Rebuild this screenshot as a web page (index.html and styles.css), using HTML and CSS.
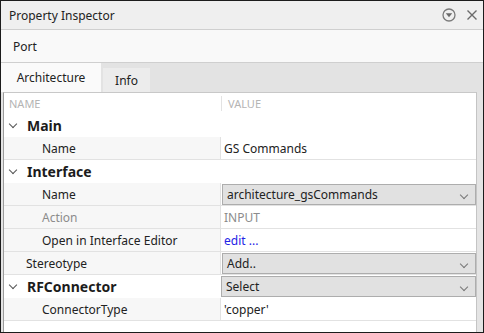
FILE: index.html
```html
<!DOCTYPE html>
<html lang="en">

<head>
    <meta charset="utf-8">
    <title>Property Inspector</title>
    <link rel="stylesheet" href="styles.css">
</head>

<body>
    <div class="panel">
        <header class="titlebar">
            <span class="title">Property Inspector</span>
            <span class="tools">
                <svg width="14" height="14" viewBox="0 0 14 14">
                    <circle cx="7" cy="7" r="6" fill="none" stroke="#7a7a7a" stroke-width="1.3" />
                    <polygon points="3.8,5.3 10.2,5.3 7,9.2" fill="#6a6a6a" />
                </svg>
                <svg width="12" height="12" viewBox="0 0 12 12">
                    <path d="M1.5 1.5 L10.5 10.5 M10.5 1.5 L1.5 10.5" stroke="#6a6a6a" stroke-width="1.4" />
                </svg>
            </span>
        </header>

        <div class="portbar">Port</div>

        <nav class="tabs">
            <div class="tab aktiv">Architecture</div>
            <div class="tab">Info</div>
        </nav>

        <section class="grid">
            <div class="row head">
                <div class="cell navn">NAME</div>
                <div class="cell vaerdi"><span class="skille"></span>VALUE</div>
            </div>

            <div class="row gruppe">
                <div class="cell navn"><span class="pil"></span>Main</div>
                <div class="cell vaerdi"></div>
            </div>
            <div class="row barn">
                <div class="cell navn">Name</div>
                <div class="cell vaerdi">GS Commands</div>
            </div>

            <div class="row gruppe">
                <div class="cell navn"><span class="pil"></span>Interface</div>
                <div class="cell vaerdi"></div>
            </div>
            <div class="row barn">
                <div class="cell navn">Name</div>
                <div class="cell vaerdi"><div class="dropdown">architecture_gsCommands</div></div>
            </div>
            <div class="row barn slukket">
                <div class="cell navn">Action</div>
                <div class="cell vaerdi">INPUT</div>
            </div>
            <div class="row barn">
                <div class="cell navn">Open in Interface Editor</div>
                <div class="cell vaerdi"><span class="link">edit ...</span></div>
            </div>
            <div class="row niveau">
                <div class="cell navn">Stereotype</div>
                <div class="cell vaerdi"><div class="dropdown">Add..</div></div>
            </div>

            <div class="row gruppe">
                <div class="cell navn"><span class="pil"></span>RFConnector</div>
                <div class="cell vaerdi"><div class="dropdown">Select</div></div>
            </div>
            <div class="row barn">
                <div class="cell navn">ConnectorType</div>
                <div class="cell vaerdi">'copper'</div>
            </div>
        </section>
    </div>
</body>

</html>
```

FILE: styles.css
```css
body {
    margin: 0;
    font-family: 'Noto Sans', 'Open Sans', sans-serif;
    font-size: 12px;
    color: #222;
}

.panel {
    width: 482px;
    height: 331px;
    border: 1px solid #1c1c1c;
    background-color: #e4e4e4;
    display: flex;
    flex-direction: column;
    overflow: hidden;
}

.titlebar {
    height: 28px;
    flex-shrink: 0;
    display: flex;
    align-items: center;
    justify-content: space-between;
    padding: 0 5px 0 8px;
    background-color: #efefef;
}

.title {
    font-size: 12px;
}

.tools {
    display: flex;
    align-items: center;
    gap: 10px;
}

.portbar {
    height: 32px;
    flex-shrink: 0;
    display: flex;
    align-items: center;
    padding-left: 12px;
    background-color: #f9f9f9;
    border-top: 1px solid #cfcfcf;
    border-bottom: 1px solid #cfcfcf;
}

/* faner */
.tabs {
    height: 29px;
    flex-shrink: 0;
    display: flex;
    align-items: flex-end;
    background-color: #e3e3e3;
}

.tab {
    height: 24px;
    width: 47px;
    margin-left: 2px;
    display: flex;
    align-items: center;
    justify-content: center;
    background-color: #ececec;
}

.tab.aktiv {
    height: 29px;
    width: 100px;
    margin-left: 0;
    background-color: #fafafa;
}

/* tabel */
.grid {
    flex: 1;
    margin: 0 6px 0 2px;
    background-color: #fff;
    border-top: 1px solid #c8c8c8;
    border-left: 1px solid #9c9c9c;
    border-right: 1px solid #c4c4c4;
}

.row {
    height: 23px;
    display: flex;
    border-bottom: 1px solid #e2e2e2;
    box-sizing: border-box;
}

.cell {
    display: flex;
    align-items: center;
    box-sizing: border-box;
    white-space: nowrap;
}

.navn {
    width: 217px;
    flex-shrink: 0;
}

.vaerdi {
    flex: 1;
    padding-left: 2px;
}

.head {
    height: 21px;
    border-bottom: none;
    color: #b4b4b4;
    font-size: 11px;
}

.head .navn {
    padding-left: 5px;
}

.head .vaerdi {
    padding-left: 0;
}

.skille {
    width: 1px;
    height: 15px;
    background-color: #e3e3e3;
    margin-right: 6px;
}

.gruppe .navn {
    font-weight: bold;
    font-size: 14px;
    color: #1c1c1c;
}

.gruppe {
    border-bottom: none;
}

.pil {
    width: 5px;
    height: 5px;
    margin: 0 11px 0 6px;
    position: relative;
    top: -2px;
    border-right: 1.3px solid #555;
    border-bottom: 1.3px solid #555;
    transform: rotate(45deg);
}

.barn .navn,
.niveau .navn {
    background-color: #f7f7f7;
    border-right: 1px solid #e2e2e2;
    padding-left: 38px;
}

.niveau .navn {
    padding-left: 22px;
}

.barn .vaerdi,
.niveau .vaerdi {
    padding-left: 3px;
}

.slukket {
    color: #8c8c8c;
}

.link {
    color: #2424e6;
}

.dropdown {
    flex: 1;
    height: 21px;
    margin-left: -2px;
    display: flex;
    align-items: center;
    padding-left: 4px;
    background-color: #e1e1e1;
    border: 1px solid #adadad;
    box-sizing: border-box;
    position: relative;
}

.dropdown::after {
    content: "";
    position: absolute;
    right: 8px;
    top: 7px;
    width: 5px;
    height: 5px;
    border-right: 1px solid #777;
    border-bottom: 1px solid #777;
    transform: rotate(45deg);
}
```
